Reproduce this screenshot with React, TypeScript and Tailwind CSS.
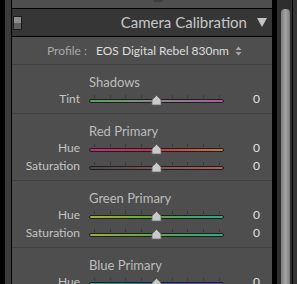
import React from 'react';

type Slider = { label: string; from: string; mid: string; to: string };
type Group = { title: string; rows: Slider[] };

const groups: Group[] = [
  { title: 'Shadows', rows: [{ label: 'Tint', from: '#5f9e5c', mid: '#8a8a8a', to: '#a65ca6' }] },
  {
    title: 'Red Primary',
    rows: [
      { label: 'Hue', from: '#c1307a', mid: '#c8344c', to: '#c8783c' },
      { label: 'Saturation', from: '#4a4a4a', mid: '#7a5656', to: '#b65a5a' },
    ],
  },
  {
    title: 'Green Primary',
    rows: [
      { label: 'Hue', from: '#a8b232', mid: '#5aa83c', to: '#2aa88e' },
      { label: 'Saturation', from: '#a0ac3a', mid: '#5ea64a', to: '#2ea88c' },
    ],
  },
  {
    title: 'Blue Primary',
    rows: [{ label: 'Hue', from: '#2aa0a0', mid: '#2f6fb0', to: '#6848b8' }],
  },
];

const ticks = [5, 21, 36, 52, 83, 98, 114, 130];

function SliderRow({ s }: { s: Slider }) {
  return (
    <div className="flex h-[18px] shrink-0 items-center">
      <div className="w-[68px] text-right text-[12px] text-[#c4c4c4]">{s.label}</div>
      <div className="relative ml-[9px] h-[18px] w-[135px]">
        {ticks.map((t) => (
          <div key={t} className="absolute top-[5px] h-[3px] w-px bg-[#393939]" style={{ left: t }} />
        ))}
        <div
          className="absolute top-[9px] h-[4px] w-full rounded-[2px] border border-[#1e1e1e]"
          style={{ background: `linear-gradient(to right, ${s.from}, ${s.mid}, ${s.to})` }}
        />
        <svg className="absolute left-[62px] top-[5px]" width="11" height="11" viewBox="0 0 11 11">
          <path d="M5.5 0.5 L10 5 L10 10 L1 10 L1 5 Z" fill="#c9c9c9" stroke="#6a6a6a" strokeWidth="0.8" />
        </svg>
      </div>
      <div className="w-[36px] text-right text-[12px] text-[#e0e0e0]">0</div>
    </div>
  );
}

export default function App() {
  return (
    <div
      className="flex h-[284px] w-[297px] overflow-hidden bg-black"
      style={{ fontFamily: 'Lato, "Open Sans", sans-serif' }}
    >
      <div className="w-[5px] shrink-0 bg-black" />
      <div className="w-[6px] shrink-0 bg-[#3b3b3b]" />
      <div className="flex w-[262px] shrink-0 flex-col overflow-hidden border-x border-black">
        <div className="relative h-[9px] shrink-0 border-b border-black bg-[#4e4e4e]">
          <div className="absolute left-[141px] top-[-3px] h-[5px] w-[10px] rounded-full bg-[#3e3e3e]" />
        </div>
        <div className="flex h-[28px] shrink-0 items-center border-b border-black bg-[#363636]">
          <div className="ml-[1px] flex h-[14px] w-[9px] flex-col border border-[#1c1c1c]">
            <div className="flex-1 bg-[#8c8c8c]" />
            <div className="flex-1 bg-[#5e5e5e]" />
          </div>
          <div className="flex-1 pr-[10px] text-right text-[15px] text-[#c6c6c6]">Camera Calibration</div>
          <svg width="10" height="9" viewBox="0 0 10 9" className="mr-[5px]">
            <path d="M0 0 H10 L5 9 Z" fill="#c4c4c4" />
          </svg>
        </div>
        <div className="shrink-0 bg-[#4e4e4e]">
          <div className="flex h-[28px] items-center border-b border-[#404040] text-[12px]">
            <div className="w-[75px] text-right text-[#a8a8a8]">Profile :</div>
            <div className="ml-[9px] text-[#dedede]">EOS Digital Rebel 830nm</div>
            <svg width="7" height="10" viewBox="0 0 7 10" className="ml-[6px]">
              <path d="M3.5 0.5 L6.5 4 H0.5 Z M0.5 6 H6.5 L3.5 9.5 Z" fill="#a8a8a8" />
            </svg>
          </div>
          {groups.map((g) => (
            <div key={g.title} className="border-b border-[#404040] pb-[5px] pt-[9px]">
              <div className="h-[16px] pl-[77px] text-[13px] leading-[16px] text-[#bdbdbd]">{g.title}</div>
              {g.rows.map((r) => (
                <SliderRow key={r.label} s={r} />
              ))}
            </div>
          ))}
        </div>
      </div>
      <div className="w-[4px] shrink-0 bg-black" />
      <div className="flex w-[13px] shrink-0 bg-[#2e2e2e] pt-[9px]">
        <div className="ml-[4px] w-[9px] rounded-t-[4px] bg-gradient-to-r from-[#7c7c7c] via-[#a4a4a4] to-[#7c7c7c]" />
      </div>
      <div className="w-[2px] shrink-0 bg-[#2e2e2e]" />
      <div className="w-px shrink-0 bg-black" />
      <div className="flex-1 bg-[#353535]" />
    </div>
  );
}
